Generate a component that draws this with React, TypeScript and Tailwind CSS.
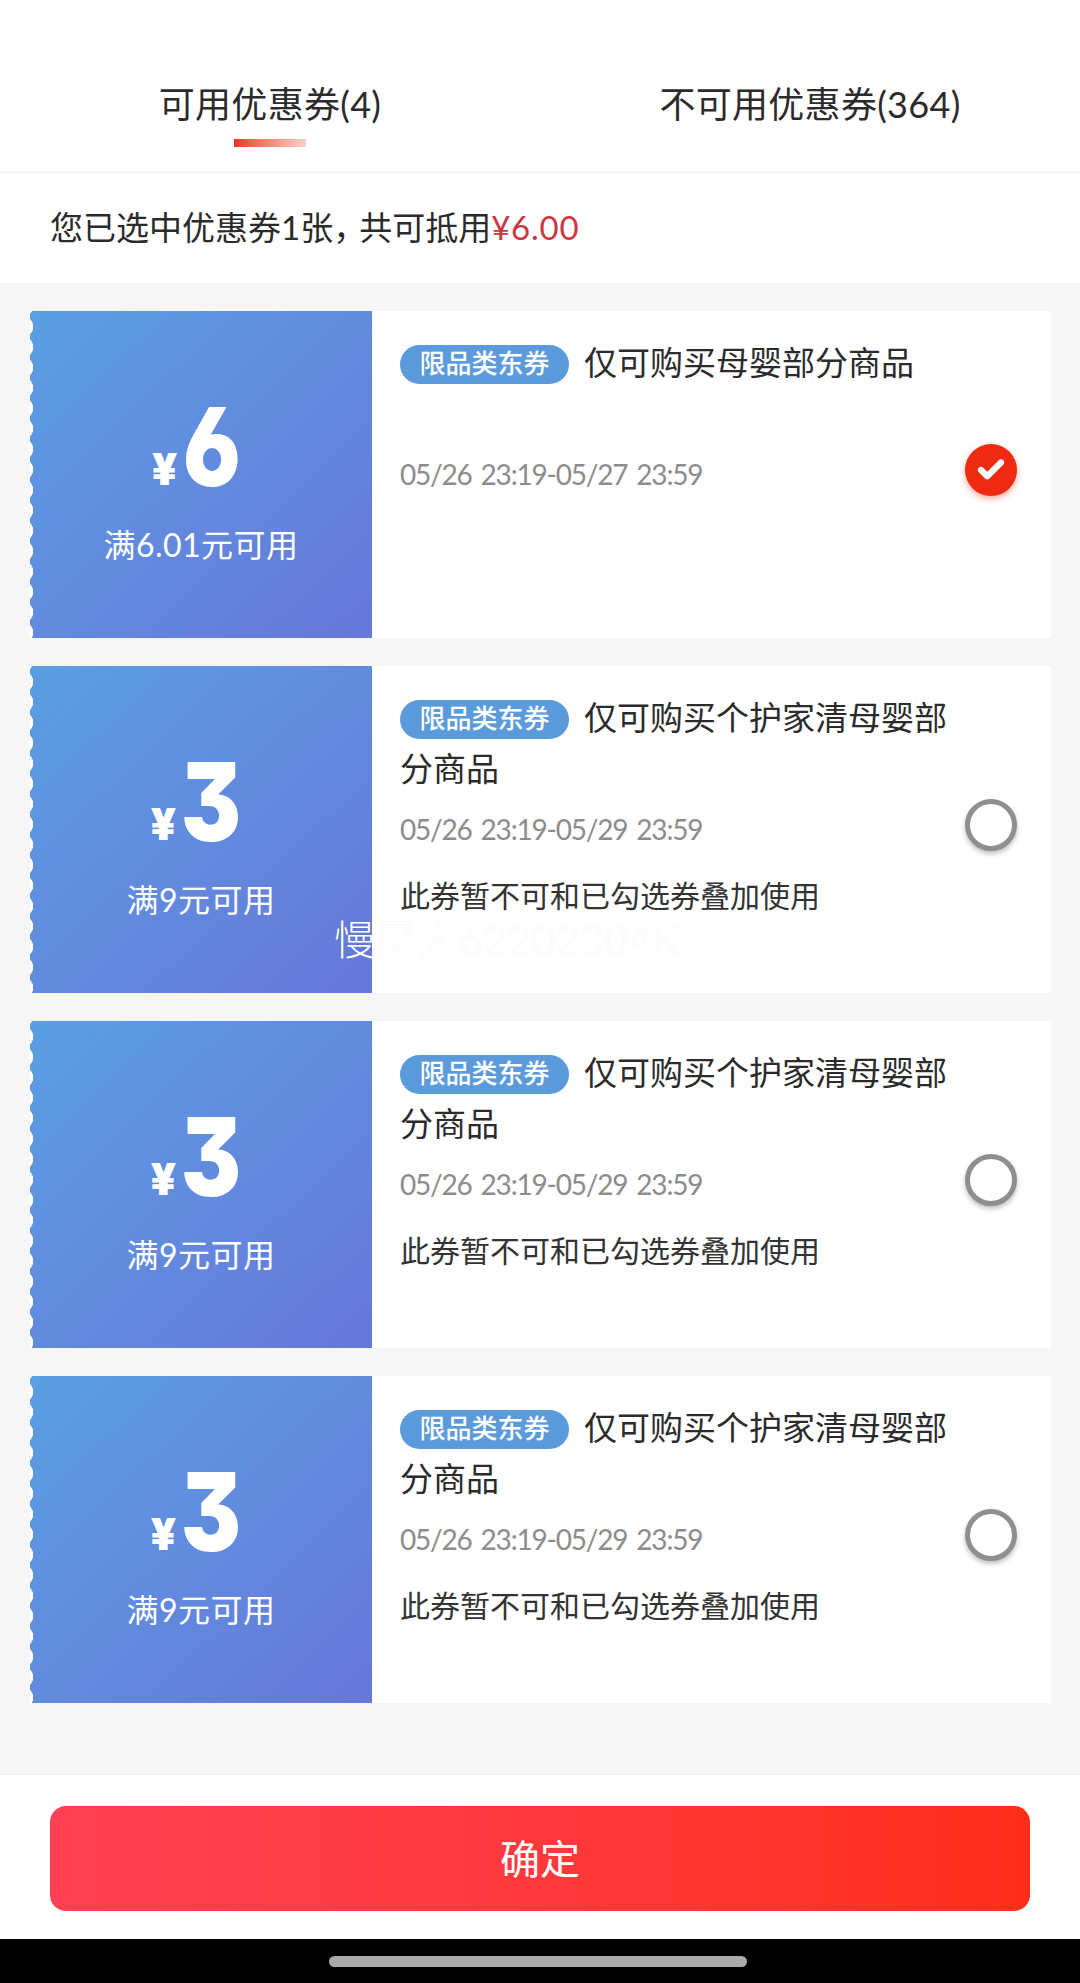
import { Check } from "lucide-react";

const coupons = [
  { amount: "6", rule: "满6.01元可用", title: "仅可购买母婴部分商品", date: "05/26 23:19-05/27 23:59", note: "", selected: true },
  { amount: "3", rule: "满9元可用", title: "仅可购买个护家清母婴部分商品", date: "05/26 23:19-05/29 23:59", note: "此券暂不可和已勾选券叠加使用", selected: false },
  { amount: "3", rule: "满9元可用", title: "仅可购买个护家清母婴部分商品", date: "05/26 23:19-05/29 23:59", note: "此券暂不可和已勾选券叠加使用", selected: false },
  { amount: "3", rule: "满9元可用", title: "仅可购买个护家清母婴部分商品", date: "05/26 23:19-05/29 23:59", note: "此券暂不可和已勾选券叠加使用", selected: false },
];

function CouponCard({ amount, rule, title, date, note, selected }: (typeof coupons)[number]) {
  return (
    <div className="flex h-[327px] bg-white">
      {/* left price block with scalloped edge */}
      <div className="relative w-[342px] shrink-0 bg-gradient-to-br from-[#5a9fe3] to-[#6677d9] text-white">
        <div className="absolute inset-y-0 left-0 w-[3px] bg-[radial-gradient(circle_at_-7px_center,#ffffff_10px,transparent_10.5px)] bg-[length:3px_20.4px] bg-[position:0_5.5px] bg-repeat-y" />
        <div className="flex h-[178px] items-end justify-center pr-[10px] font-['Inter'] font-black [font-feature-settings:'cv03','cv09']">
          <span className="mb-[-2px] text-[44px] leading-[44px]">¥</span>
          <span className="mr-[-12px] ml-[5px] inline-block origin-left scale-x-[0.83] text-[108px] leading-[84px]">{amount}</span>
        </div>
        <div className="mt-[34px] text-center text-[32px] leading-[44px] tracking-[0.5px]">{rule}</div>
      </div>

      {/* right detail block */}
      <div className="relative flex-1 pt-[26px] pl-[28px]">
        <div className="h-[104px] w-[565px] text-[33px] leading-[51px] text-[#2b2b2b]">
          <span className="mr-[15px] inline-block h-[39px] w-[169px] rounded-full bg-[#5b9bdc] text-center align-[2px] text-[26px] leading-[37px] font-medium text-white">
            限品类东券
          </span>
          {title}
        </div>
        <div className="mt-[13px] text-[28px] leading-[40px] tracking-[-1.2px] text-[#8c8c8c] [word-spacing:3px]">{date}</div>
        {note && <div className="mt-[26px] text-[30px] leading-[40px] text-[#333333]">{note}</div>}

        {/* radio */}
        {selected ? (
          <div className="absolute top-[133px] right-[34px] flex h-[52px] w-[52px] items-center justify-center rounded-full bg-[#ee2a12] shadow-[0_3px_6px_rgba(238,42,18,0.4)]">
            <Check size={30} strokeWidth={5} className="text-white" />
          </div>
        ) : (
          <div className="absolute top-[133px] right-[34px] h-[52px] w-[52px] rounded-full border-[5px] border-[#8f8f8f] bg-white shadow-[0_3px_5px_rgba(0,0,0,0.25)]" />
        )}
      </div>
    </div>
  );
}

export default function App() {
  return (
    <div className="relative flex h-[1983px] w-[1080px] flex-col bg-white font-['Lato','Noto_Sans_CJK_SC',sans-serif]">
      {/* tabs */}
      <div className="grid h-[173px] grid-cols-2 border-b border-[#ececec] pt-[78px]">
        <div className="flex flex-col items-center">
          <span className="text-[36px] leading-[52px] tracking-[0.3px] text-[#2b2b2b]">可用优惠券(4)</span>
          <div className="mt-[9px] h-[8px] w-[72px] bg-gradient-to-r from-[#e8321c] to-[#f8cfc9]" />
        </div>
        <div className="text-center">
          <span className="text-[36px] leading-[52px] tracking-[0.3px] text-[#2b2b2b]">不可用优惠券(364)</span>
        </div>
      </div>

      {/* summary */}
      <div className="flex h-[110px] items-center pl-[50px] text-[33px] text-[#2b2b2b]">
        您已选中优惠券1张<span className="tracking-[-7px]">，</span>共可抵用<span className="tracking-[0.8px] text-[#cc3640]">¥6.00</span>
      </div>

      {/* list */}
      <div className="flex flex-1 flex-col gap-[28px] bg-[#f6f6f6] pt-[28px] pr-[29px] pl-[30px]">
        {coupons.map((c, i) => (
          <CouponCard key={i} {...c} />
        ))}
      </div>

      {/* footer */}
      <div className="h-[165px] border-t border-[#eeeeee] px-[50px] pt-[31px]">
        <button className="h-[105px] w-full rounded-[16px] bg-gradient-to-r from-[#ff4153] to-[#ff2e18] text-[40px] text-white">
          确定
        </button>
      </div>

      {/* nav bar */}
      <div className="flex h-[44px] items-center justify-center bg-black pr-[5px]">
        <div className="h-[11px] w-[418px] rounded-full bg-[#aaaaaa]" />
      </div>

      {/* watermark */}
      <div className="absolute top-[916px] left-[334px] text-[41px] leading-[48px] font-light tracking-[0.5px] text-white [text-shadow:0_0_2px_rgba(0,0,0,0.07)]">
        慢星人62202304K
      </div>
    </div>
  );
}
